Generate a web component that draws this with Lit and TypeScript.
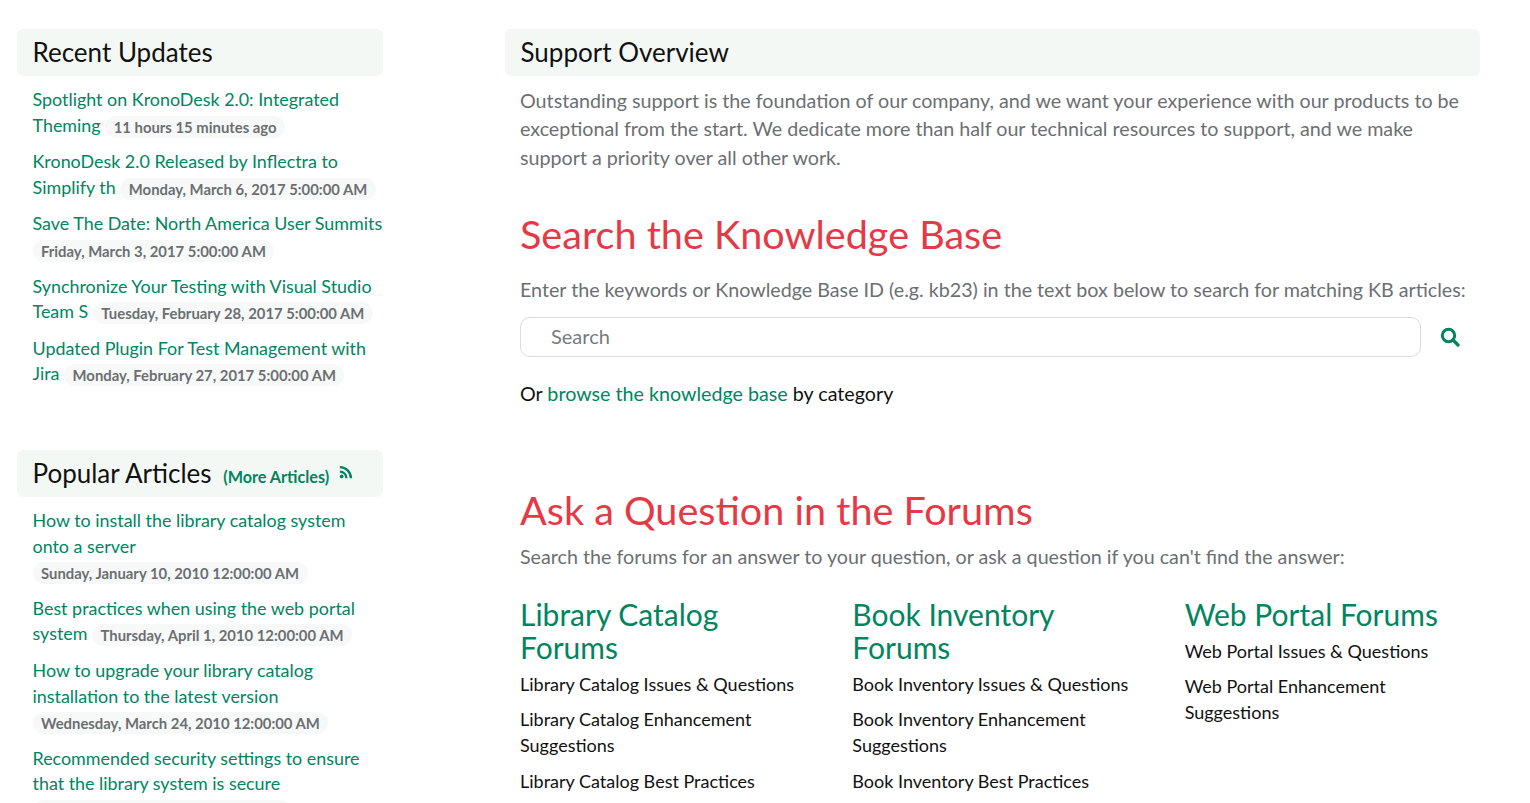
import { LitElement, html, css } from "lit";
import { customElement } from "lit/decorators.js";

const recent = [
  ["Spotlight on KronoDesk 2.0: Integrated Theming", "11 hours 15 minutes ago"],
  ["KronoDesk 2.0 Released by Inflectra to Simplify th", "Monday, March 6, 2017 5:00:00 AM"],
  ["Save The Date: North America User Summits", "Friday, March 3, 2017 5:00:00 AM"],
  ["Synchronize Your Testing with Visual Studio Team S", "Tuesday, February 28, 2017 5:00:00 AM"],
  ["Updated Plugin For Test Management with Jira", "Monday, February 27, 2017 5:00:00 AM"],
];
const popular = [
  ["How to install the library catalog system onto a server", "Sunday, January 10, 2010 12:00:00 AM"],
  ["Best practices when using the web portal system", "Thursday, April 1, 2010 12:00:00 AM"],
  ["How to upgrade your library catalog installation to the latest version", "Wednesday, March 24, 2010 12:00:00 AM"],
  ["Recommended security settings to ensure that the library system is secure", "Friday, March 12, 2010 12:00:00 AM"],
];
const forums = [
  ["Library Catalog Forums", ["Library Catalog Issues & Questions", "Library Catalog Enhancement Suggestions", "Library Catalog Best Practices"]],
  ["Book Inventory Forums", ["Book Inventory Issues & Questions", "Book Inventory Enhancement Suggestions", "Book Inventory Best Practices"]],
  ["Web Portal Forums", ["Web Portal Issues & Questions", "Web Portal Enhancement Suggestions"]],
] as [string, string[]][];

@customElement("app-root")
export class AppRoot extends LitElement {
  static styles = css`
    :host { display: block; height: 803px; overflow: hidden; background: #fff; font-family: Lato, sans-serif; color: #111; }
    a { color: #00855f; text-decoration: none; }
    .page { display: grid; grid-template-columns: 366px 975px; column-gap: 122px; padding: 29px 0 0 17px; }
    .bar { background: #f4f8f5; border-radius: 6px; height: 47px; box-sizing: border-box; padding-left: 15.5px; font-size: 26px; line-height: 47px; color: #111; font-weight: 400; margin: 0; white-space: nowrap; }
    .more { font-size: 16.2px; font-weight: 700; margin-left: 5px; }
    .rss { width: 14px; height: 14px; margin-left: 3px; vertical-align: 4px; fill: #00855f; }
    .list { margin: 11px -1px 0 0; padding: 0 0 0 15.5px; list-style: none; font-size: 17.9px; line-height: 25.6px; }
    .list li { margin-bottom: 11px; }
    .badge { display: inline-block; background: #f7f9f8; color: #6b6f72; font-size: 14.85px; font-weight: 700; line-height: 22px; padding: 0 8.5px; border-radius: 11px; vertical-align: -1px; white-space: nowrap; }
    .popular { margin-top: 63px; }
    .intro { margin: 10.5px 0 0 15px; font-size: 19.7px; line-height: 28.5px; color: #6b6f72; }
    h1 { margin: 0 0 0 15px; color: #e63946; font-size: 39.6px; font-weight: 400; line-height: 50px; }
    .kb { margin-top: 36.5px; }
    .hint { margin: 17px 0 0 15px; font-size: 19.7px; line-height: 28px; color: #6b6f72; white-space: nowrap; }
    .search { display: flex; align-items: center; margin: 13px 0 0 15px; }
    .input { width: 901px; height: 40px; box-sizing: border-box; border: 1px solid #dcdcdc; border-radius: 10px; padding-left: 30px; font-size: 20px; line-height: 37px; color: #767b7f; }
    .glass { width: 20px; height: 20px; margin-left: 19px; }
    .browse { margin: 23px 0 0 15px; font-size: 19.7px; line-height: 28px; color: #111; }
    .ask { margin-top: 77px; }
    .hint2 { margin: 8px 0 0 15px; font-size: 19.7px; line-height: 28px; color: #6b6f72; }
    .cols { display: grid; grid-template-columns: repeat(3, 1fr); column-gap: 37px; margin: 27px 0 0 15px; width: 960px; }
    h3 { margin: 0 0 7px; font-size: 30px; line-height: 33px; font-weight: 400; color: #00855f; }
    .col p { margin: 0 0 9.98px; font-size: 18px; line-height: 26px; color: #111; }
  `;

  private item(l: string[]) {
    return html`<li><a href="#">${l[0]}</a> <span class="badge">${l[1]}</span></li>`;
  }

  render() {
    return html`<div class="page">
      <aside>
        <h2 class="bar">Recent Updates</h2>
        <ul class="list">${recent.map((r) => this.item(r))}</ul>
        <div class="popular">
          <h2 class="bar">Popular Articles <a class="more" href="#">(More Articles)</a>
            <svg class="rss" viewBox="0 0 16 16"><circle cx="3" cy="13" r="2.2"/><path d="M1 6.2v2.6a6.2 6.2 0 0 1 6.2 6.2h2.6A8.8 8.8 0 0 0 1 6.2z"/><path d="M1 1v2.7A11.3 11.3 0 0 1 12.3 15H15A14 14 0 0 0 1 1z"/></svg>
          </h2>
          <ul class="list">${popular.map((r) => this.item(r))}</ul>
        </div>
      </aside>
      <main>
        <h2 class="bar">Support Overview</h2>
        <p class="intro">Outstanding support is the foundation of our company, and we want your experience with our products to be exceptional from the start. We dedicate more than half our technical resources to support, and we make support a priority over all other work.</p>
        <h1 class="kb">Search the Knowledge Base</h1>
        <p class="hint">Enter the keywords or Knowledge Base ID (e.g. kb23) in the text box below to search for matching KB articles:</p>
        <div class="search">
          <div class="input">Search</div>
          <svg class="glass" viewBox="0 0 20 20" fill="none" stroke="#00855f"><circle cx="8.5" cy="8.5" r="6.2" stroke-width="3"/><path d="M13 13l5 5" stroke-width="3.2" stroke-linecap="round"/></svg>
        </div>
        <p class="browse">Or <a href="#">browse the knowledge base</a> by category</p>
        <h1 class="ask">Ask a Question in the Forums</h1>
        <p class="hint2">Search the forums for an answer to your question, or ask a question if you can't find the answer:</p>
        <div class="cols">
          ${forums.map(([t, items]) => html`<div class="col"><h3>${t}</h3>${items.map((i) => html`<p>${i}</p>`)}</div>`)}
        </div>
      </main>
    </div>`;
  }
}
